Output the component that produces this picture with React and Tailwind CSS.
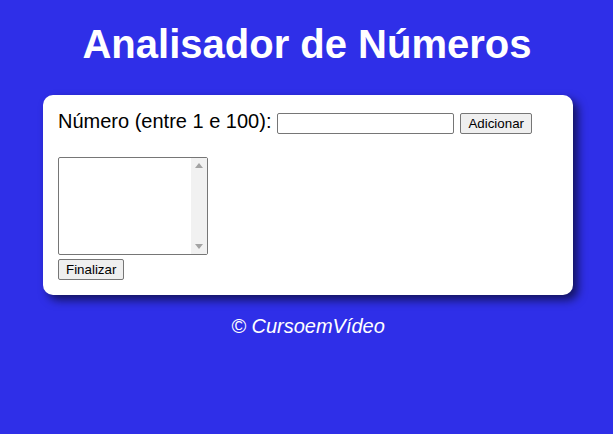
export default function App() {
  const font = { fontFamily: '"Liberation Sans", Arial, sans-serif' };
  return (
    <div className="min-h-[434px] w-full bg-[#2f2fe8] pt-[21px]" style={font}>
      <h1 className="pl-[1px] text-center text-[40px] leading-[46px] font-bold text-white">Analisador de Números</h1>
      <div className="ml-[43px] mt-[28px] w-[530px] rounded-[10px] bg-white px-[15px] pt-[15px] pb-[15px] shadow-[5px_5px_10px_rgba(0,0,0,0.6)]">
        <div className="flex items-start">
          <span className="text-[20px] leading-[23px] text-black">Número (entre 1 e 100):</span>
          <input
            type="text"
            className="ml-[6px] mt-[3px] h-[21px] w-[177px] rounded-[2px] border border-[#767676] bg-white px-[2px] text-[13.33px] outline-none"
          />
          <button className="ml-[6px] mt-[3px] h-[21px] rounded-[2px] border border-[#767676] bg-[#efefef] px-[7px] text-[13.33px] leading-[15px] text-black">
            Adicionar
          </button>
        </div>
        <div className="mt-[23px] flex h-[98px] w-[150px] rounded-[2px] border border-[#767676] bg-white">
          <div className="flex-1" />
          <div className="flex w-[16px] flex-col items-center justify-between bg-[#f1f1f1] py-[5px]">
            <svg width="8" height="5" viewBox="0 0 8 5">
              <polygon points="4,0 8,5 0,5" fill="#a3a3a3" />
            </svg>
            <svg width="8" height="5" viewBox="0 0 8 5">
              <polygon points="0,0 8,0 4,5" fill="#a3a3a3" />
            </svg>
          </div>
        </div>
        <button className="mt-[4px] block h-[21px] rounded-[2px] border border-[#767676] bg-[#efefef] px-[7px] text-[13.33px] leading-[15px] text-black">
          Finalizar
        </button>
      </div>
      <p className="mt-[20px] pl-[3px] text-center text-[20px] leading-[23px] italic text-white">© CursoemVídeo</p>
    </div>
  );
}
